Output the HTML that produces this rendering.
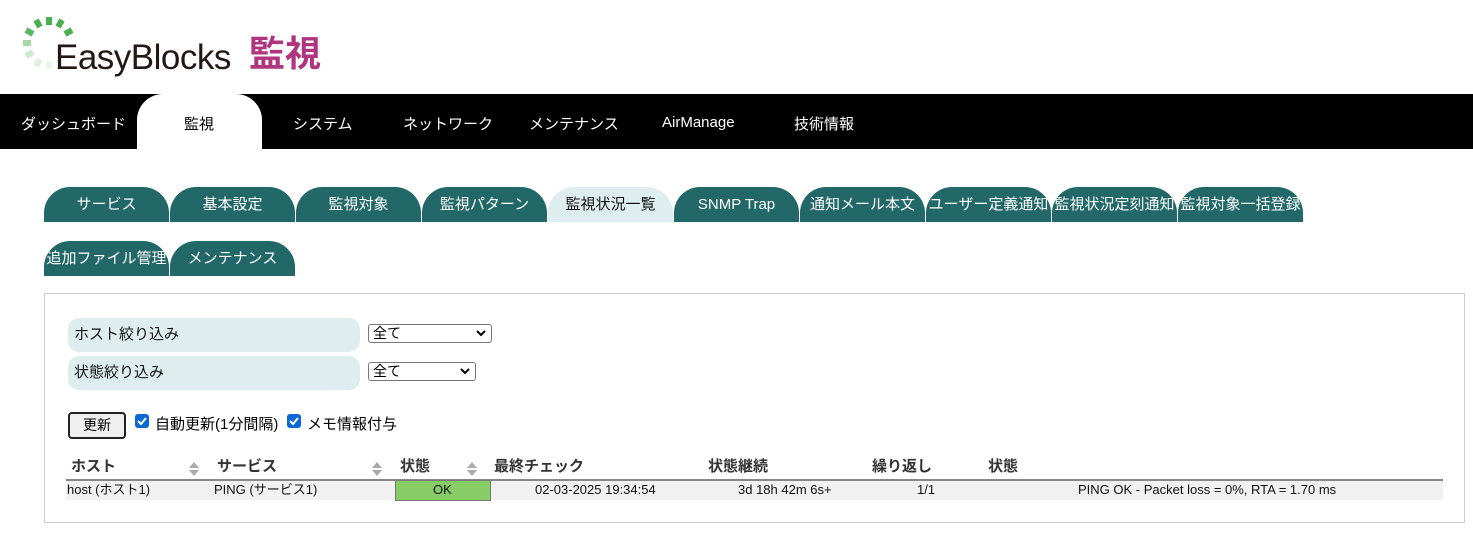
<!DOCTYPE html>
<html><head><meta charset="utf-8"><style>
*{margin:0;padding:0;box-sizing:border-box}
body{width:1473px;height:533px;background:#fff;font-family:"Liberation Sans","Noto Sans CJK JP",sans-serif;position:relative;overflow:hidden;color:#000}
.a{position:absolute;white-space:nowrap}
.nav{position:absolute;left:0;top:94px;width:1473px;height:55px;background:#000}
.nv{position:absolute;top:21px;color:#fff;font-size:15px;line-height:20px}
.tab{position:absolute;width:125px;height:35px;background:#236868;border-radius:26px 26px 0 0;color:#fff;font-size:15px;text-align:center;line-height:35px;overflow:hidden;white-space:nowrap}
.lbl{position:absolute;left:68px;width:292px;height:34px;background:#deeded;border-radius:11px;font-size:15px;line-height:34px;padding-left:6px;color:#111}
.sel{position:absolute;left:368px;height:19px;border:1px solid #777;border-radius:3px;background:#fff;font-size:14px;line-height:17px;padding-left:4px}
.sel svg{position:absolute;right:5px;top:5px}
.th{position:absolute;top:457px;font-size:15px;line-height:20px;font-weight:bold;color:#333}
.td{position:absolute;top:480px;font-size:13px;line-height:20px;color:#111}
.srt{position:absolute;top:461px}
.cb{position:absolute;width:14px;height:14px;background:#0b69d6;border-radius:3px}
</style></head><body>
<svg class="a" style="left:20px;top:14px" width="60" height="60" viewBox="0 0 60 60">
<g stroke-width="6" stroke-linecap="butt">
<line x1="29" y1="3" x2="29" y2="11" stroke="#4caf50"/>
<line x1="42" y1="6" x2="38" y2="13" stroke="#4caf50"/>
<line x1="52" y1="16" x2="45" y2="20" stroke="#4caf50"/>
<line x1="16" y1="6" x2="20" y2="13" stroke="#4caf50"/>
<line x1="6" y1="16" x2="13" y2="20" stroke="#5cb860"/>
<line x1="3" y1="29" x2="11" y2="29" stroke="#a7d8a4"/>
<line x1="6" y1="42" x2="13" y2="38" stroke="#cfe9cc"/>
<line x1="16" y1="52" x2="20" y2="45" stroke="#e2f1df"/>
<line x1="29" y1="55" x2="29" y2="47" stroke="#eef7ec"/>
</g></svg>
<div class="a" style="left:55px;top:38px;font-size:35px;line-height:40px;color:#231815;letter-spacing:-0.5px">EasyBlocks</div>
<div class="a" style="left:249px;top:32px;font-size:36px;line-height:44px;font-weight:bold;color:#b0357f">監視</div>
<div class="nav">
<div class="nv" style="left:21px">ダッシュボード</div>
<div style="position:absolute;left:137px;top:0;width:125px;height:55px;background:#fff;border-radius:26px 26px 0 0"></div>
<div class="nv" style="left:184px;color:#000">監視</div>
<div class="nv" style="left:293px">システム</div>
<div class="nv" style="left:403px">ネットワーク</div>
<div class="nv" style="left:529px">メンテナンス</div>
<div class="nv" style="left:662px;top:19px">AirManage</div>
<div class="nv" style="left:794px">技術情報</div>
</div>
<div class="tab" style="left:44px;top:187px">サービス</div>
<div class="tab" style="left:170px;top:187px">基本設定</div>
<div class="tab" style="left:296px;top:187px">監視対象</div>
<div class="tab" style="left:422px;top:187px">監視パターン</div>
<div class="tab" style="left:548px;top:187px;background:#deeded;color:#111">監視状況一覧</div>
<div class="tab" style="left:674px;top:187px">SNMP Trap</div>
<div class="tab" style="left:800px;top:187px">通知メール本文</div>
<div class="tab" style="left:926px;top:187px">ユーザー定義通知</div>
<div class="tab" style="left:1052px;top:187px">監視状況定刻通知</div>
<div class="tab" style="left:1178px;top:187px">監視対象一括登録</div>
<div class="tab" style="left:44px;top:241px">追加ファイル管理</div>
<div class="tab" style="left:170px;top:241px">メンテナンス</div>
<div class="a" style="left:44px;top:293px;width:1421px;height:230px;border:1px solid #ccc"></div>
<div class="lbl" style="top:318px">ホスト絞り込み</div>
<div class="lbl" style="top:356px">状態絞り込み</div>
<div class="sel" style="top:324px;width:124px">全て<svg width="10" height="7" viewBox="0 0 10 7"><path d="M1 1l4 4 4-4" stroke="#000" stroke-width="2" fill="none"/></svg></div>
<div class="sel" style="top:362px;width:108px">全て<svg width="10" height="7" viewBox="0 0 10 7"><path d="M1 1l4 4 4-4" stroke="#000" stroke-width="2" fill="none"/></svg></div>
<div class="a" style="left:68px;top:412px;width:58px;height:27px;border:2px solid #222;border-radius:4px;background:#efefef;font-size:14px;text-align:center;line-height:22px">更新</div>
<div class="cb" style="left:135px;top:414px"><svg width="14" height="14"><path d="M3 7l3 3 5-6" stroke="#fff" stroke-width="2" fill="none"/></svg></div>
<div class="a" style="left:155px;top:415px;font-size:15px;line-height:20px">自動更新(1分間隔)</div>
<div class="cb" style="left:287px;top:414px"><svg width="14" height="14"><path d="M3 7l3 3 5-6" stroke="#fff" stroke-width="2" fill="none"/></svg></div>
<div class="a" style="left:307px;top:415px;font-size:15px;line-height:20px">メモ情報付与</div>
<div class="th" style="left:71px">ホスト</div>
<div class="th" style="left:217px">サービス</div>
<div class="th" style="left:400px">状態</div>
<div class="th" style="left:494px">最終チェック</div>
<div class="th" style="left:708px">状態継続</div>
<div class="th" style="left:872px">繰り返し</div>
<div class="th" style="left:988px">状態</div>
<svg class="srt" style="left:187px" width="14" height="16"><path d="M2 7l5-6 5 6z M2 9l5 6 5-6z" fill="#aaa"/></svg>
<svg class="srt" style="left:370px" width="14" height="16"><path d="M2 7l5-6 5 6z M2 9l5 6 5-6z" fill="#aaa"/></svg>
<svg class="srt" style="left:465px" width="14" height="16"><path d="M2 7l5-6 5 6z M2 9l5 6 5-6z" fill="#aaa"/></svg>
<div class="a" style="left:66px;top:479px;width:1377px;height:2px;background:#888"></div>
<div class="a" style="left:66px;top:481px;width:1377px;height:19px;background:#f2f1f1"></div>
<div class="a" style="left:395px;top:480px;width:96px;height:21px;background:#88cc66;border:1px solid #777"></div>
<div class="td" style="left:67px">host (ホスト1)</div>
<div class="td" style="left:214px">PING (サービス1)</div>
<div class="td" style="left:433px">OK</div>
<div class="td" style="left:535px">02-03-2025 19:34:54</div>
<div class="td" style="left:738px">3d 18h 42m 6s+</div>
<div class="td" style="left:917px">1/1</div>
<div class="td" style="left:1078px">PING OK - Packet loss = 0%, RTA = 1.70 ms</div>
</body></html>
